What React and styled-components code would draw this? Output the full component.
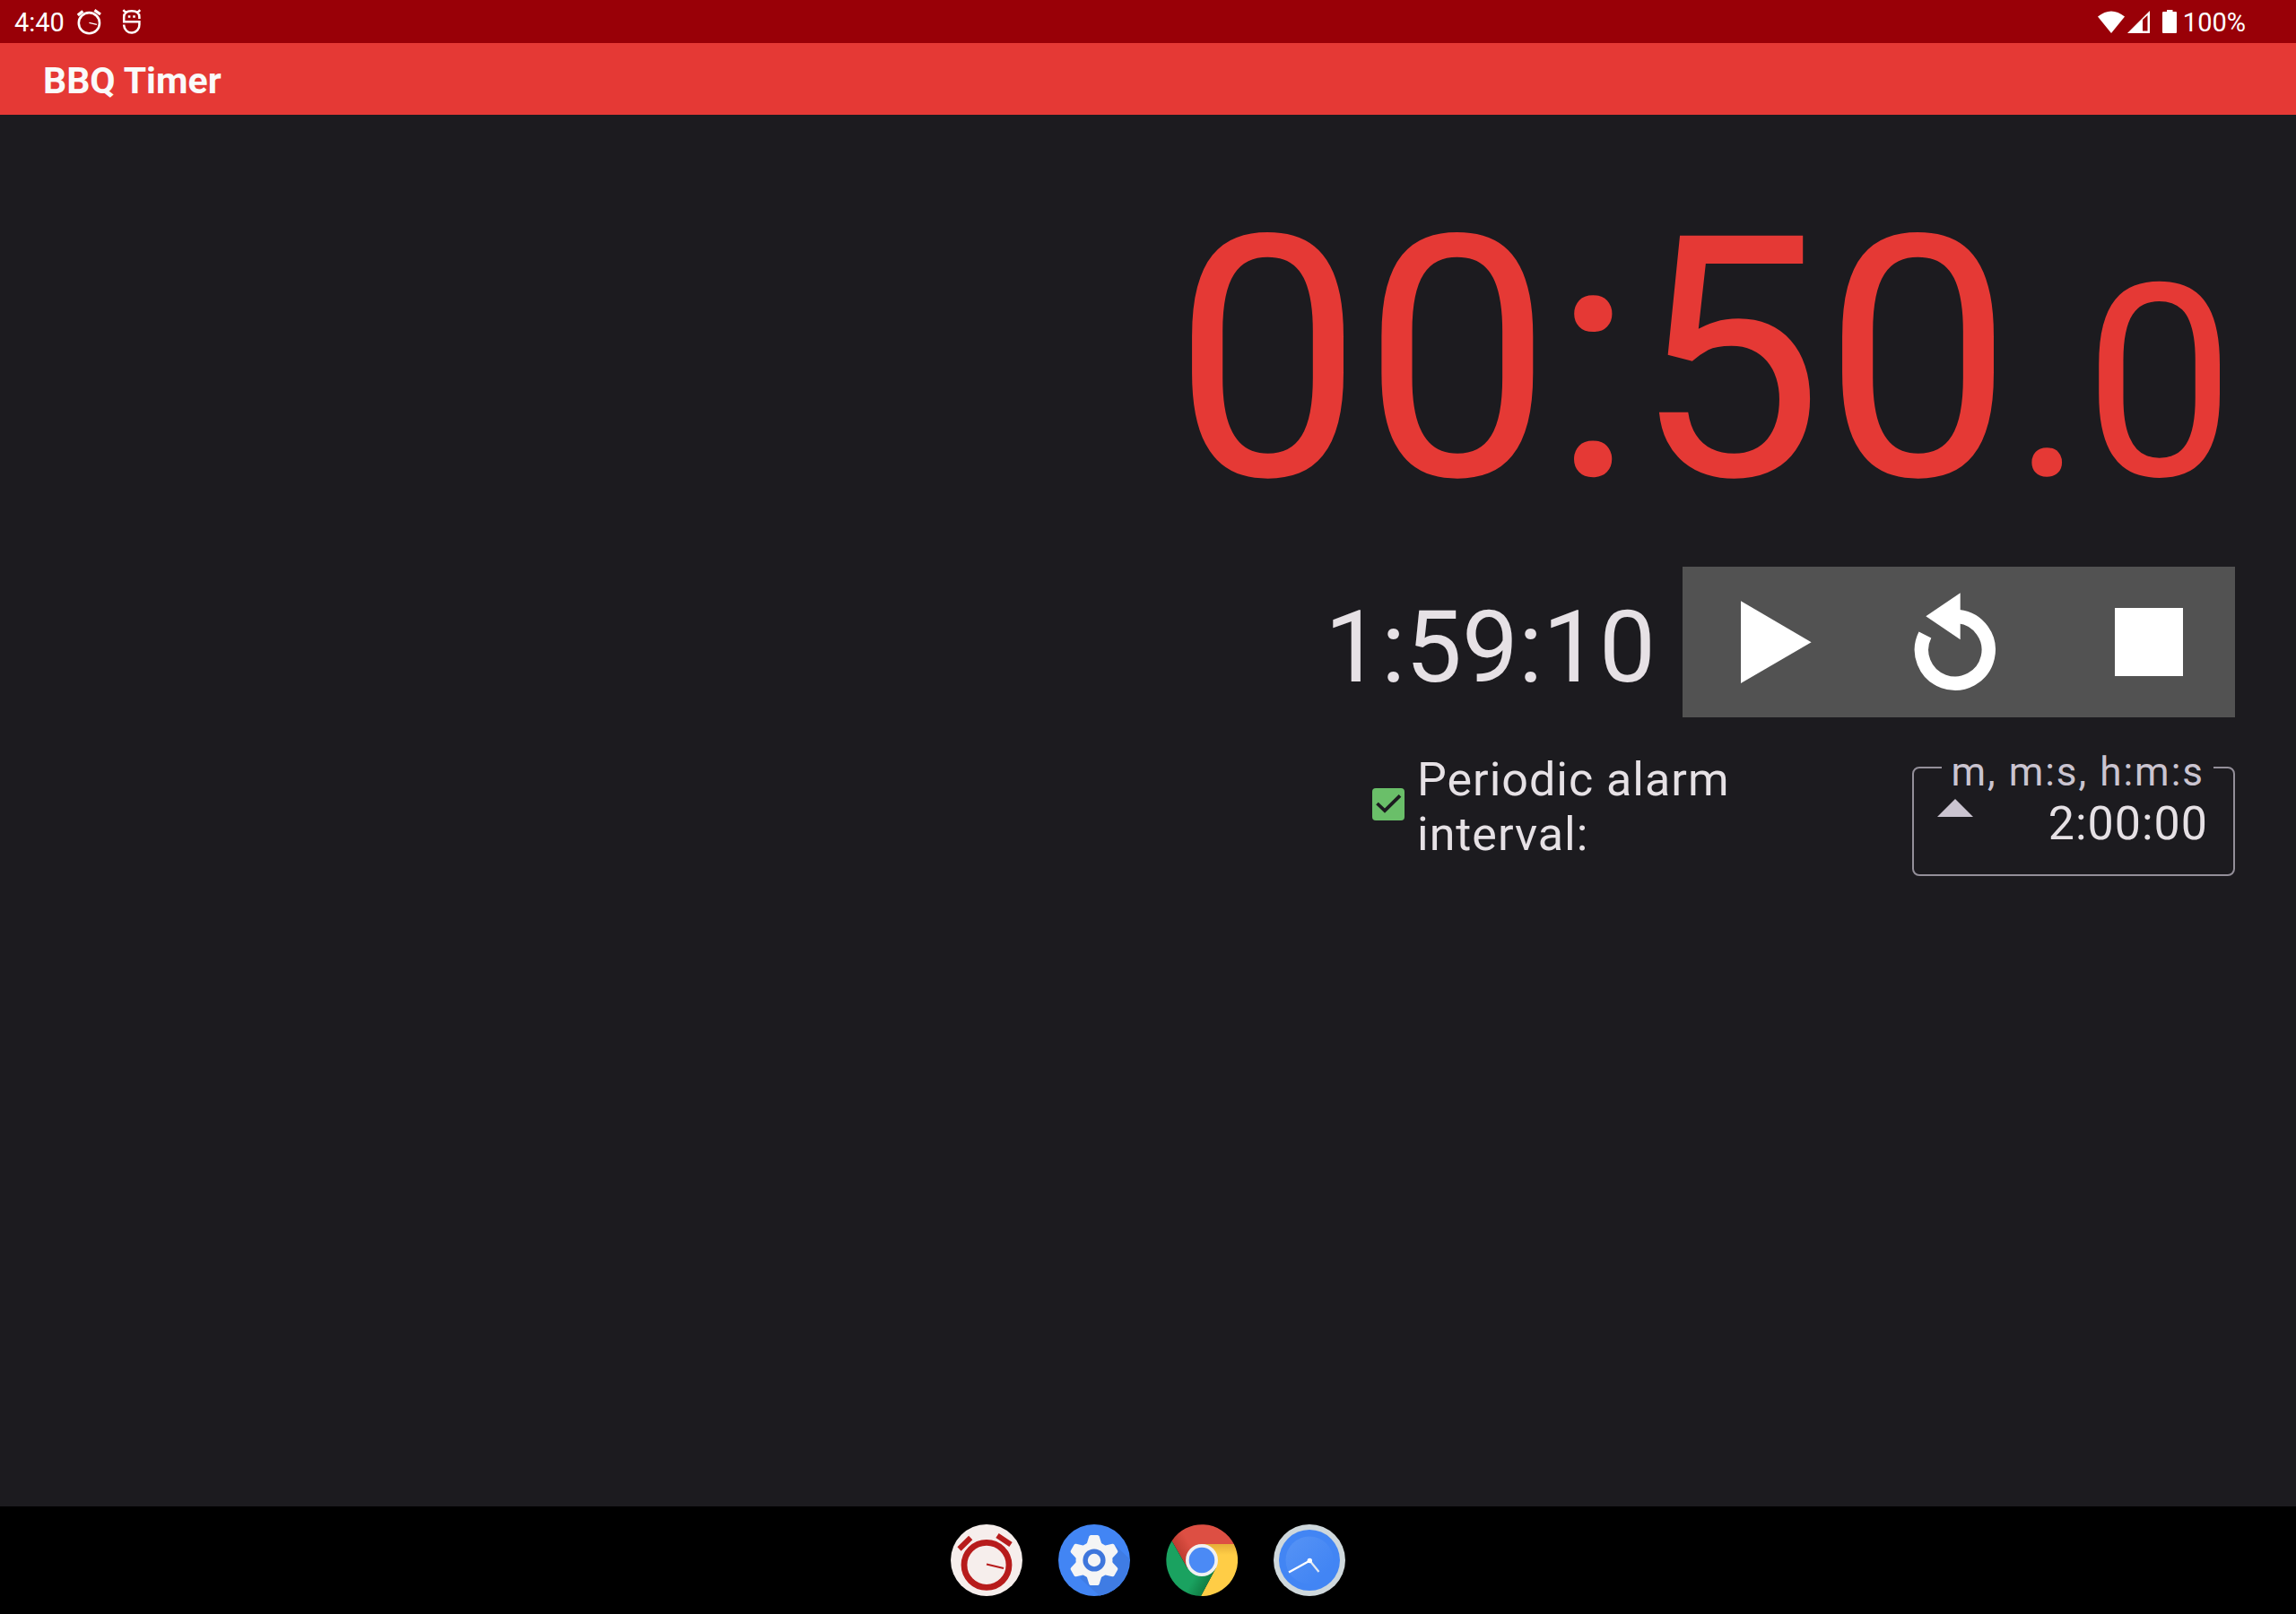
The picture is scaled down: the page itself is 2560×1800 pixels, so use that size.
import React, { useState } from "react";
import styled, { createGlobalStyle } from "styled-components";

const GlobalStyle = createGlobalStyle`
  *, *::before, *::after { box-sizing: border-box; }
  body {
    margin: 0;
    background: #1c1b1f;
    color: #e6e1e5;
    font-family: Roboto, "Liberation Sans", sans-serif;
  }
  button, input { font: inherit; color: inherit; }
`;

const Screen = styled.div`
  display: flex;
  flex-direction: column;
  min-height: 100vh;
`;

const StatusBar = styled.div`
  display: flex;
  align-items: center;
  justify-content: space-between;
  height: 48px;
  padding: 4px 56px 0 16px;
  background: #990007;
  color: #ffffff;
  font-size: 29px;
  line-height: 32px;
`;

const StatusGroup = styled.div`
  display: flex;
  align-items: center;
  gap: ${(p) => p.$gap};
`;

const StatusText = styled.span`
  padding-bottom: 2px;
`;

const StatusIcon = styled.svg`
  display: block;
  width: ${(p) => p.$width};
  height: 32px;
`;

const AppBar = styled.header`
  display: flex;
  align-items: center;
  height: 80px;
  padding: 4px 48px 0;
  background: #e53935;
  color: #fafafa;
`;

const Title = styled.h1`
  margin: 0;
  font-size: 41px;
  font-weight: 700;
  line-height: 48px;
`;

const Content = styled.main`
  flex: 1;
  display: flex;
  flex-direction: column;
  align-items: flex-end;
  padding: 54px 68px 0;
`;

const Countdown = styled.div`
  height: 440px;
  margin-bottom: 10px;
  color: #e53935;
  font-size: 376px;
  line-height: 440px;
  white-space: nowrap;
`;

const Tenths = styled.span`
  font-size: 300px;
  line-height: 1;
`;

const ControlRow = styled.div`
  display: flex;
  align-items: center;
  gap: 30px;
  margin-bottom: 25px;
`;

const Elapsed = styled.div`
  padding-top: 12px;
  font-size: 112px;
  line-height: 132px;
`;

const Controls = styled.div`
  display: grid;
  grid-template-columns: repeat(3, 1fr);
  width: 616px;
  height: 168px;
  background: #525252;
`;

const ControlButton = styled.button`
  display: flex;
  align-items: center;
  justify-content: center;
  padding: 0;
  border: 0;
  background: none;
  color: #ffffff;
`;

const ControlIcon = styled.svg`
  display: block;
  width: 120px;
  height: 120px;
`;

const AlarmRow = styled.div`
  display: flex;
  align-items: center;
`;

const AlarmToggle = styled.label`
  display: flex;
  align-items: center;
  gap: 14px;
  width: 602px;
  padding: 0 24px 2px 0;
  font-size: 52px;
  line-height: 61px;
  letter-spacing: 1px;
`;

const CheckBox = styled.input`
  appearance: none;
  flex: none;
  width: 36px;
  height: 36px;
  margin: 0 0 6px;
  border: 4px solid #6abf69;
  border-radius: 4px;

  &:checked {
    border: 0;
    background: #6abf69 url("data:image/svg+xml,%3Csvg xmlns='http://www.w3.org/2000/svg' viewBox='0 0 36 36'%3E%3Cpath d='M5.5 17 14 25.2 31 8.4' fill='none' stroke='%231c1b1f' stroke-width='3.8'/%3E%3C/svg%3E") center / 36px 36px no-repeat;
  }
`;

const IntervalField = styled.fieldset`
  width: 360px;
  min-width: 0;
  margin: 0;
  padding: 0 22px 28px 26px;
  border: 2px solid #938f99;
  border-radius: 8px;
`;

const IntervalLegend = styled.legend`
  margin: 0 0 0 auto;
  padding: 10px 10px 0;
  color: #cac4d0;
  font-size: 44px;
  line-height: 52px;
  letter-spacing: 2px;
`;

const IntervalEntry = styled.div`
  display: flex;
  align-items: center;
  height: 60px;
`;

const HistoryButton = styled.button`
  flex: none;
  display: flex;
  width: 40px;
  height: 60px;
  padding: 4px 0 0;
  border: 0;
  background: none;
  color: #cac4d0;
`;

const IntervalInput = styled.input`
  flex: 1;
  min-width: 0;
  height: 60px;
  padding: 2px 6px 0 0;
  border: 0;
  outline: 0;
  background: none;
  font-size: 52px;
  line-height: 58px;
  letter-spacing: 1px;
  text-align: right;
`;

const Taskbar = styled.nav`
  display: flex;
  align-items: center;
  justify-content: center;
  gap: 40px;
  height: 120px;
  background: #000000;
`;

const AppButton = styled.button`
  width: 80px;
  height: 80px;
  padding: 0;
  border: 0;
  border-radius: 50%;
  background: none;

  svg { display: block; width: 80px; height: 80px; }
`;

const teeth = [0, 60, 120, 180, 240, 300];

function TimerAppIcon() {
  return (
    <svg viewBox="0 0 80 80" aria-hidden="true">
      <circle cx="40" cy="40" r="40" fill="#f6eeec" />
      <g fill="none" stroke="#b71c1c">
        <circle cx="40" cy="45.3" r="25" strokeWidth="6.8" />
        <path d="M9.5 27.5 22.2 15M52 12.5 67 22.5" strokeWidth="6" />
        <path d="M40 44.5 59 49" strokeWidth="2.2" />
      </g>
    </svg>
  );
}

function SettingsAppIcon() {
  return (
    <svg viewBox="0 0 80 80" aria-hidden="true">
      <circle cx="40" cy="40" r="40" fill="#4285f4" />
      <path d="M64 24 79 38A40 40 0 0 1 46 79.5L24 60Z" fill="#3f7ce4" />
      <g fill="#f5f5f5">
        <circle cx="40" cy="40" r="20.5" />
        {teeth.map((a) => (
          <path key={a} d="M31 24 34.3 13.5Q34.8 12 36.3 12H43.7Q45.2 12 45.7 13.5L49 24Z" transform={`rotate(${a} 40 40)`} />
        ))}
      </g>
      <circle cx="40" cy="40" r="12.6" fill="#3e76dc" />
      <circle cx="40" cy="40" r="7.2" fill="#f5f5f5" />
    </svg>
  );
}

function ChromeAppIcon() {
  return (
    <svg viewBox="0 0 80 80" aria-hidden="true">
      <defs>
        <linearGradient id="shadeRed" x1="14" y1="28" x2="26" y2="21" gradientUnits="userSpaceOnUse">
          <stop offset="0" stopColor="#c23f33" />
          <stop offset="1" stopColor="#dd4f43" />
        </linearGradient>
        <linearGradient id="shadeYellow" x1="58" y1="22" x2="58" y2="34" gradientUnits="userSpaceOnUse">
          <stop offset="0" stopColor="#e5ae38" />
          <stop offset="1" stopColor="#ffcd46" />
        </linearGradient>
        <linearGradient id="shadeGreen" x1="46" y1="62" x2="34" y2="55" gradientUnits="userSpaceOnUse">
          <stop offset="0" stopColor="#128449" />
          <stop offset="1" stopColor="#1aa260" />
        </linearGradient>
      </defs>
      <path d="M6.6 18.5A40 40 0 0 1 75.8 22H40L24 49Z" fill="url(#shadeRed)" />
      <path d="M75.8 22A40 40 0 0 1 39 80L55.5 49 40 22Z" fill="url(#shadeYellow)" />
      <path d="M6.6 18.5A40 40 0 0 0 39 80L55.5 49 24 49Z" fill="url(#shadeGreen)" />
      <circle cx="40" cy="40" r="18" fill="#f1f1f1" />
      <circle cx="40" cy="40" r="14.3" fill="#4b8af5" />
    </svg>
  );
}

function ClockAppIcon() {
  return (
    <svg viewBox="0 0 80 80" aria-hidden="true">
      <defs>
        <linearGradient id="clockFace" x1="20" y1="20" x2="56" y2="56" gradientUnits="userSpaceOnUse">
          <stop offset="0" stopColor="#5391f5" />
          <stop offset="1" stopColor="#4285f4" />
        </linearGradient>
      </defs>
      <circle cx="40" cy="40" r="40" fill="#cfd8dc" />
      <circle cx="40" cy="40" r="34" fill="#4285f4" />
      <circle cx="40" cy="40" r="26.5" fill="url(#clockFace)" />
      <path d="M40 40 50.5 53" stroke="#e3e9f0" strokeWidth="2.2" />
      <path d="M40.5 40.5 17 53.5" stroke="#ffffff" strokeWidth="2.4" />
      <circle cx="40.3" cy="40.5" r="2.7" fill="#ffffff" />
    </svg>
  );
}

export default function App() {
  const [enabled, setEnabled] = useState(true);
  const [interval, setIntervalText] = useState("2:00:00");

  return (
    <Screen>
      <GlobalStyle />
      <StatusBar>
        <StatusGroup $gap="14px">
          <StatusText>4:40</StatusText>
          <StatusIcon $width="28px" viewBox="0 0 28 32" fill="none" stroke="#ffffff" aria-hidden="true">
            <circle cx="13.4" cy="15.7" r="11.6" strokeWidth="2.6" />
            <path d="M.8 7 6.4 2.4M19.4 1.4 26 6" strokeWidth="3.2" />
            <path d="M13.4 15.4 22 17.4" strokeWidth="1.4" />
          </StatusIcon>
          <StatusIcon $width="44px" viewBox="1 0 44 32" fill="none" stroke="#ffffff" strokeWidth="2.5" aria-hidden="true">
            <path d="M11.2 15.2V9Q11.2 2.2 19.8 2.2T28.4 9V11M10 14.2H28.4V17.4A8.6 8.6 0 0 1 11.2 18.4V17.6M10.4 1.2 13.4 4.4M29.2 1.2 26.2 4.4" />
            <path d="M15.8 8.5H18.4M21.2 8.5H23.8" strokeWidth="2.6" />
          </StatusIcon>
        </StatusGroup>
        <StatusGroup $gap="3px">
          <StatusIcon $width="30px" viewBox="0 0 30 32" aria-hidden="true">
            <path d="M0 8.5Q15-3.5 30 8.5L15 27Z" fill="#ffffff" />
          </StatusIcon>
          <StatusIcon $width="36px" viewBox="0 0 36 32" aria-hidden="true">
            <path fillRule="evenodd" d="M0 27 25 2V27ZM17 12V24.5H22.5V7Z" fill="#ffffff" />
          </StatusIcon>
          <StatusIcon $width="20px" viewBox="0 0 20 32" aria-hidden="true">
            <path d="M1.5 3H5V1H11.5V3H15Q16 3 16 4V26Q16 27 15 27H1Q0 27 0 26V4Q0 3 1.5 3Z" fill="#ffffff" />
          </StatusIcon>
          <StatusText>100%</StatusText>
        </StatusGroup>
      </StatusBar>
      <AppBar>
        <Title>BBQ Timer</Title>
      </AppBar>
      <Content>
        <Countdown role="timer">
          00:50<Tenths>.0</Tenths>
        </Countdown>
        <ControlRow>
          <Elapsed>1:59:10</Elapsed>
          <Controls>
            <ControlButton type="button" aria-label="Start">
              <ControlIcon viewBox="0 0 120 120" aria-hidden="true">
                <path d="M22 14.3V106L100.6 60.2Z" fill="currentColor" />
              </ControlIcon>
            </ControlButton>
            <ControlButton type="button" aria-label="Reset">
              <ControlIcon viewBox="0 0 120 120" aria-hidden="true">
                <path d="M61.7 5.3V57.3L23.3 31.3Z" fill="currentColor" />
                <path d="M60 31.6A37.4 37.4 0 1 1 22.4 52" fill="none" stroke="currentColor" strokeWidth="15.4" />
              </ControlIcon>
            </ControlButton>
            <ControlButton type="button" aria-label="Stop">
              <ControlIcon viewBox="0 0 120 120" aria-hidden="true">
                <path d="M29 22H105V98H29Z" fill="currentColor" />
              </ControlIcon>
            </ControlButton>
          </Controls>
        </ControlRow>
        <AlarmRow>
          <AlarmToggle>
            <CheckBox type="checkbox" checked={enabled} onChange={(e) => setEnabled(e.target.checked)} />
            <span>Periodic alarm interval:</span>
          </AlarmToggle>
          <IntervalField>
            <IntervalLegend>
              <label htmlFor="interval">m, m:s, h:m:s</label>
            </IntervalLegend>
            <IntervalEntry>
              <HistoryButton type="button" aria-label="Recent intervals">
                <svg width="40" height="20" viewBox="0 0 40 20" aria-hidden="true">
                  <path d="M20 0 40 20H0Z" fill="currentColor" />
                </svg>
              </HistoryButton>
              <IntervalInput id="interval" type="text" value={interval} onChange={(e) => setIntervalText(e.target.value)} />
            </IntervalEntry>
          </IntervalField>
        </AlarmRow>
      </Content>
      <Taskbar aria-label="Apps">
        <AppButton type="button" aria-label="BBQ Timer"><TimerAppIcon /></AppButton>
        <AppButton type="button" aria-label="Settings"><SettingsAppIcon /></AppButton>
        <AppButton type="button" aria-label="Chrome"><ChromeAppIcon /></AppButton>
        <AppButton type="button" aria-label="Clock"><ClockAppIcon /></AppButton>
      </Taskbar>
    </Screen>
  );
}
